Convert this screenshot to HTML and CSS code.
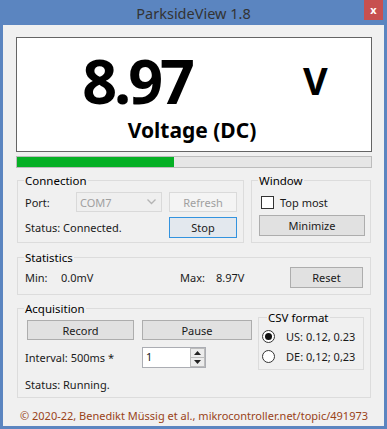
FILE: index.html
```html
<!DOCTYPE html>
<html lang="en">
<head>
    <meta charset="UTF-8">
    <title>ParksideView 1.8</title>
    <link rel="stylesheet" href="styles.css">
</head>
<body>
    <div class="window">
        <div class="titlebar">
            <span class="title">ParksideView 1.8</span>
            <button class="close-btn">x</button>
        </div>

        <div class="client">
            <div class="display">
                <div class="reading">
                    <span class="value">8.97</span>
                    <span class="unit">V</span>
                </div>
                <div class="mode">Voltage (DC)</div>
            </div>

            <div class="progress">
                <div class="progress-fill" style="width: 44.4%"></div>
            </div>

            <div class="group-row">
                <fieldset class="group connection">
                    <legend>Connection</legend>
                    <div class="conn-grid">
                        <span>Port:</span>
                        <div class="combo disabled">
                            <span>COM7</span>
                            <svg width="9" height="6" viewBox="0 0 9 6"><path d="M0.5 0.5 L4.5 4.5 L8.5 0.5" fill="none" stroke="#b4b4b4" stroke-width="1.3"/></svg>
                        </div>
                        <button class="btn" disabled>Refresh</button>
                        <span class="span-2">Status: Connected.</span>
                        <button class="btn default">Stop</button>
                    </div>
                </fieldset>

                <fieldset class="group window-group">
                    <legend>Window</legend>
                    <label class="check-line">
                        <span class="checkbox"></span>
                        <span>Top most</span>
                    </label>
                    <button class="btn minimize-btn">Minimize</button>
                </fieldset>
            </div>

            <fieldset class="group statistics">
                <legend>Statistics</legend>
                <div class="stats-grid">
                    <span>Min:</span>
                    <span>0.0mV</span>
                    <span>Max:</span>
                    <span>8.97V</span>
                    <button class="btn reset-btn">Reset</button>
                </div>
            </fieldset>

            <fieldset class="group acquisition">
                <legend>Acquisition</legend>
                <div class="acq-grid">
                    <button class="btn record-btn">Record</button>
                    <button class="btn pause-btn">Pause</button>

                    <fieldset class="group csv">
                        <legend>CSV format</legend>
                        <label class="radio-line">
                            <span class="radio checked"></span>
                            <span>US: 0.12, 0.23</span>
                        </label>
                        <label class="radio-line">
                            <span class="radio"></span>
                            <span>DE: 0,12; 0,23</span>
                        </label>
                    </fieldset>

                    <span class="interval">Interval: 500ms *</span>
                    <div class="spinner">
                        <span class="spin-value">1</span>
                        <div class="spin-buttons">
                            <span class="spin-btn"><svg width="7" height="4" viewBox="0 0 7 4"><path d="M0 4 L3.5 0 L7 4 Z" fill="#222"/></svg></span>
                            <span class="spin-btn"><svg width="7" height="4" viewBox="0 0 7 4"><path d="M0 0 L3.5 4 L7 0 Z" fill="#222"/></svg></span>
                        </div>
                    </div>

                    <span class="acq-status">Status: Running.</span>
                </div>
            </fieldset>

            <div class="footer">© 2020-22, Benedikt Müssig et al., mikrocontroller.net/topic/491973</div>
        </div>
    </div>
</body>
</html>
```

FILE: styles.css
```css
* {
    box-sizing: border-box;
}

body {
    margin: 0;
    background-color: #5b85c0;
    font-family: "Noto Sans", "Open Sans", sans-serif;
    font-size: 11px;
    color: #1a1a1a;
}

.window {
    width: 387px;
    height: 429px;
    padding: 0 3px 3px 3px;
    display: flex;
    flex-direction: column;
}

/* title bar */
.titlebar {
    flex-shrink: 0;
    height: 25px;
    display: flex;
    justify-content: center;
    align-items: center;
    position: relative;
}

.title {
    font-size: 14.5px;
    line-height: 20px;
    color: #333;
}

.close-btn {
    position: absolute;
    top: 0;
    right: 1px;
    width: 19px;
    height: 20px;
    border: none;
    padding: 0;
    background-color: #c75050;
    color: #fff;
    font-family: "Noto Sans", sans-serif;
    font-size: 11px;
    font-weight: bold;
    line-height: 18px;
}

.client {
    flex: 1;
    overflow: hidden;
    background-color: #f0f0f0;
    padding: 12px 12px 0 13px;
}

/* big display */
.display {
    height: 115px;
    background: #fff;
    border: 1px solid #646464;
}

.reading {
    display: flex;
    align-items: center;
    margin-top: 12px;
    height: 61px;
}

.value {
    width: 175px;
    text-align: right;
    font-size: 61px;
    font-weight: bold;
    line-height: 61px;
    letter-spacing: -3px;
    color: #000;
}

.unit {
    margin-left: 111px;
    margin-top: -2px;
    font-size: 38px;
    font-weight: bold;
    line-height: 40px;
    color: #000;
}

.mode {
    text-align: center;
    font-size: 21px;
    font-weight: bold;
    line-height: 26px;
    margin-top: 6px;
    margin-right: 4px;
    color: #000;
}

.progress {
    height: 12px;
    margin-top: 4px;
    background: #e6e6e6;
    border: 1px solid #bcbcbc;
}

.progress-fill {
    height: 100%;
    background: #06b025;
}

/* group boxes */
.group {
    margin: 0 1px;
    padding: 0 7px;
    border: 1px solid #dcdcdc;
    border-radius: 0;
    min-width: 0;
}

.group legend {
    padding: 0 1px;
    margin-left: -1px;
    font-size: 11.5px;
    line-height: 15px;
    color: #000;
}

.group-row {
    display: flex;
    gap: 7px;
    margin: 5px 1px 0;
}

.group-row .group {
    margin: 0;
}

.connection {
    width: 227px;
    padding: 4px 5px 4px 7px;
}

.conn-grid {
    display: grid;
    grid-template-columns: 51px 93px 68px;
    grid-template-rows: 20px 21px;
    row-gap: 5px;
    align-items: center;
}

.span-2 {
    grid-column: span 2;
}

.window-group {
    width: 120px;
    padding: 4px 5px 6px 7px;
}

.check-line {
    display: flex;
    align-items: center;
    gap: 6px;
    height: 20px;
    padding-left: 2px;
}

.checkbox {
    width: 13px;
    height: 13px;
    background: #fff;
    border: 1px solid #333;
}

/* buttons */
.btn {
    height: 21px;
    padding: 0;
    border: 1px solid #adadad;
    background: #e1e1e1;
    font-family: inherit;
    font-size: 11px;
    color: #1a1a1a;
}

.btn:disabled {
    height: 20px;
    background: #f4f4f4;
    border-color: #dadada;
    color: #a0a0a0;
}

.btn.default {
    border-color: #3393df;
    background: #e3e8ee;
}

.combo {
    width: 86px;
    height: 20px;
    display: flex;
    align-items: center;
    justify-content: space-between;
    padding: 0 5px 0 3px;
    border: 1px solid #d9d9d9;
    background: #efefef;
    color: #a0a0a0;
}

.minimize-btn {
    width: 106px;
    margin-top: 3px;
}

.statistics {
    margin-top: 7px;
    padding: 2px 7px 6px 7px;
}

.stats-grid {
    display: grid;
    grid-template-columns: 36px 119px 36px 1fr 73px;
    align-items: center;
    height: 21px;
}

.acquisition {
    margin-top: 6px;
    padding: 4px 7px 5px 7px;
}

.acq-grid {
    display: grid;
    grid-template-columns: 117px 116px 106px;
    grid-template-rows: 20px 28px 24px;
    align-items: center;
}

.record-btn {
    width: 107px;
    height: 20px;
    margin-left: 2px;
}

.pause-btn {
    width: 110px;
    height: 20px;
}

.interval {
    align-self: end;
    padding-bottom: 3px;
}

.spinner {
    align-self: end;
    width: 64px;
    height: 21px;
    display: flex;
    justify-content: space-between;
    background: #fff;
    border: 1px solid #abadb3;
}

.spin-value {
    padding-left: 3px;
    line-height: 18px;
    color: #1a1a1a;
}

.spin-buttons {
    display: flex;
    flex-direction: column;
    width: 15px;
}

.spin-btn {
    flex: 1;
    display: flex;
    align-items: center;
    justify-content: center;
    background: #ececec;
    border: 1px solid #bcbcbc;
}

.spin-btn + .spin-btn {
    border-top: none;
}

.acq-status {
    align-self: end;
}

.csv {
    grid-column: 3;
    grid-row: 1 / span 3;
    align-self: start;
    margin: -10px 0 0;
    padding: 1px 4px 3px 3px;
}

.csv legend {
    margin-left: 5px;
}

.radio-line {
    display: flex;
    align-items: center;
    gap: 11px;
    height: 20px;
}

.radio {
    width: 13px;
    height: 13px;
    border-radius: 50%;
    border: 1px solid #333;
    background: #fff;
    display: flex;
    align-items: center;
    justify-content: center;
}

.radio.checked::after {
    content: "";
    width: 7px;
    height: 7px;
    border-radius: 50%;
    background: #111;
}

.footer {
    margin-top: 10px;
    padding-left: 4px;
    color: #9a4318;
    line-height: 15px;
}
```
